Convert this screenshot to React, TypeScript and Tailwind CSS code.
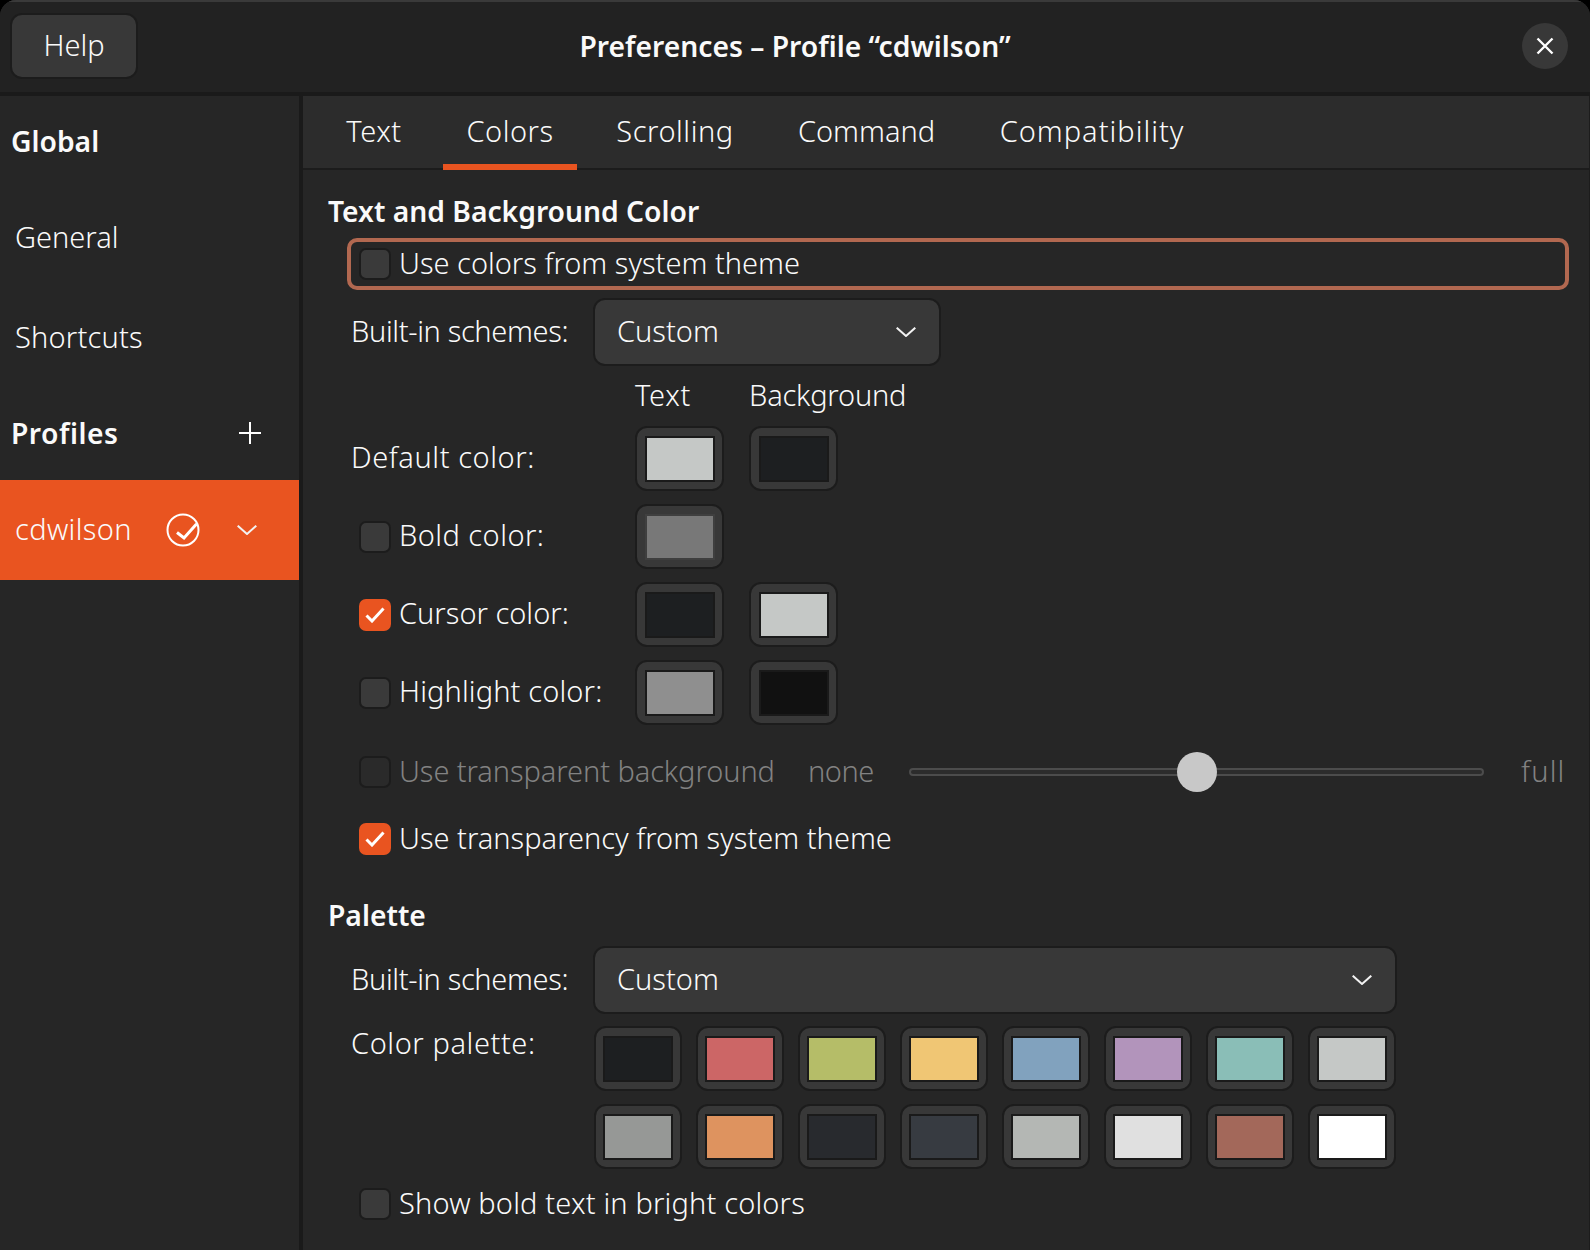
type SwatchProps = { color: string; muted?: boolean; className?: string };

function Swatch({ color, muted, className }: SwatchProps) {
  return (
    <div className={`box-border flex h-[65px] items-center justify-center rounded-[12px] border-2 border-[#1c1c1c] bg-[#383838] ${className ?? ""}`}>
      <div className={`box-border h-[46px] w-[70px] border-2 ${muted ? "border-[#3f3f3f]" : "border-[#1a1a1a]"}`} style={{ backgroundColor: color }} />
    </div>
  );
}

function Check({ checked, disabled }: { checked?: boolean; disabled?: boolean }) {
  if (checked) {
    return (
      <div className="flex h-[32px] w-[32px] shrink-0 items-center justify-center rounded-[7px] bg-[#e95420]">
        <svg width="20" height="16" viewBox="0 0 20 16" fill="none">
          <path d="M1.5 8.5 L7 14 L18.5 1.5" stroke="#fff" strokeWidth="3" />
        </svg>
      </div>
    );
  }
  return (
    <div className={`box-border h-[32px] w-[32px] shrink-0 rounded-[7px] border-2 border-[#1c1c1c] ${disabled ? "bg-[#2a2a2a]" : "bg-[#3a3a3a]"}`} />
  );
}

function Chevron({ className }: { className?: string }) {
  return (
    <svg className={className} width="20" height="10" viewBox="0 0 20 10" fill="none">
      <path d="M0.7 0.7 L10 9 L19.3 0.7" stroke="#f2f2f2" strokeWidth="2" />
    </svg>
  );
}

function Dropdown({ width }: { width: string }) {
  return (
    <div className={`box-border flex h-[68px] items-center justify-between rounded-[12px] border-2 border-[#1c1c1c] bg-[#383838] pl-[22px] pr-[23px] ${width}`}>
      <span className="pb-[4px]">Custom</span>
      <Chevron />
    </div>
  );
}

const palette = [
  "#1d1f21", "#cc6666", "#b5bd68", "#f0c674", "#81a2be", "#b294bb", "#8abeb7", "#c5c8c6",
  "#969896", "#de935f", "#282a2e", "#373b41", "#b4b7b4", "#e0e0e0", "#a3685a", "#ffffff",
];

const tabs = [
  { label: "Text", width: "w-[106px]", text: "tracking-[0.5px]" },
  { label: "Colors", width: "w-[134px]", active: true, text: "tracking-[0.5px]" },
  { label: "Scrolling", width: "w-[164px]", text: "tracking-[0.55px]" },
  { label: "Command", width: "w-[187px]", text: "" },
  { label: "Compatibility", width: "w-[232px]", text: "tracking-[1px]" },
];

function ColorRow({ label, tracking, check, fg, bg, muted }: { label: string; tracking?: string; check?: "on" | "off"; fg: string; bg?: string; muted?: boolean }) {
  return (
    <div className="flex h-[65px] items-center">
      <div className="flex w-[287px] items-center">
        {check ? (
          <div className="flex items-center gap-[8px] pl-[11px]">
            <Check checked={check === "on"} />
            <span className={`pb-[4px] ${tracking ?? ""}`}>{label}</span>
          </div>
        ) : (
          <span className={`pb-[4px] pl-[3px] ${tracking ?? ""}`}>{label}</span>
        )}
      </div>
      <Swatch color={fg} muted={muted} className="w-[89px]" />
      {bg && <Swatch color={bg} className="ml-[25px] w-[89px]" />}
    </div>
  );
}

export default function App() {
  return (
    <div className="h-[1250px] w-[1590px] overflow-hidden bg-black font-['Noto_Sans',sans-serif] text-[29px] font-light leading-none text-[#fafafa]">
      <div className="flex h-full flex-col overflow-hidden rounded-t-[16px] bg-[#262626]">
        <header className="box-border grid h-[96px] shrink-0 grid-cols-[1fr_auto_1fr] items-center border-t-2 border-b-4 border-t-[#3a3a3a] border-b-[#1a1a1a] bg-[#222222]">
          <div className="pb-[2px] pl-[10px]">
            <div className="box-border flex h-[66px] w-[128px] items-center justify-center rounded-[12px] border-2 border-[#1c1c1c] bg-[#383838]">
              <span className="pb-[4px]">Help</span>
            </div>
          </div>
          <div className="pb-[2px] text-[28.25px] font-semibold">Preferences – Profile “cdwilson”</div>
          <div className="flex justify-end pb-[2px] pr-[22px]">
            <div className="flex h-[46px] w-[46px] items-center justify-center rounded-full bg-[#383838]">
              <svg width="18" height="18" viewBox="0 0 18 18" fill="none">
                <path d="M1.5 1.5 L16.5 16.5 M16.5 1.5 L1.5 16.5" stroke="#fff" strokeWidth="2.4" />
              </svg>
            </div>
          </div>
        </header>

        <div className="flex min-h-0 flex-1 border-r border-[#1c1c1c]">
          <aside className="box-border w-[303px] shrink-0 border-r-4 border-[#1a1a1a]">
            <div className="flex h-[90px] items-center pl-[11px] text-[28.25px] font-semibold">Global</div>
            <div className="flex h-[102px] items-center pb-[2px] pl-[15px]">General</div>
            <div className="flex h-[98px] items-center pb-[2px] pl-[15px] tracking-[0.2px]">Shortcuts</div>
            <div className="flex h-[94px] items-center justify-between pl-[11px] pr-[38px] text-[28.25px] font-semibold">
              <span className="tracking-[0.5px]">Profiles</span>
              <svg width="22" height="22" viewBox="0 0 22 22" fill="none">
                <path d="M11 0 V22 M0 11 H22" stroke="#fff" strokeWidth="2" />
              </svg>
            </div>
            <div className="flex h-[100px] items-center bg-[#e95420] pl-[15px]">
              <span className="pb-[4px] tracking-[0.35px]">cdwilson</span>
              <svg className="ml-[34px]" width="34" height="34" viewBox="0 0 34 34" fill="none">
                <circle cx="17" cy="17" r="15.5" stroke="#fff" strokeWidth="2" />
                <path d="M11 19.5 L18 25 L30.5 11" stroke="#fff" strokeWidth="3" />
              </svg>
              <Chevron className="ml-[37px]" />
            </div>
          </aside>

          <main className="min-w-0 flex-1">
            <div className="box-border flex h-[74px] items-start gap-[16px] border-b-2 border-[#1c1c1c] bg-[#2c2c2c] pl-[18px]">
              {tabs.map((t) => (
                <div
                  key={t.label}
                  className={`box-border flex h-[74px] shrink-0 items-center justify-center ${t.width} ${t.active ? "border-b-[6px] border-[#e95420]" : "pb-[6px]"}`}
                >
                  <span className={t.text}>{t.label}</span>
                </div>
              ))}
            </div>

            <div className="pl-[25px] pr-[20px] pt-[16px]">
              <div className="flex h-[50px] items-center text-[28.25px] font-semibold">Text and Background Color</div>

              <div className="ml-[20px]">
                <div className="-ml-[1px] mt-[2px] box-border flex h-[52px] items-center gap-[8px] rounded-[10px] border-[4px] border-[#b26850] pl-[8px]">
                  <Check />
                  <span className="pb-[4px]">Use colors from system theme</span>
                </div>

                <div className="mt-[8px] flex items-center">
                  <span className="w-[245px] pb-[4px] pl-[3px] tracking-[-0.36px]">Built-in schemes:</span>
                  <Dropdown width="w-[348px]" />
                </div>

                <div className="flex h-[60px] items-center pb-[4px]">
                  <span className="w-[287px]" />
                  <span className="w-[114px] tracking-[0.7px]">Text</span>
                  <span className="tracking-[-0.2px]">Background</span>
                </div>

                <div className="flex flex-col gap-[13px]">
                  <ColorRow label="Default color:" tracking="tracking-[0.58px]" fg="#c5c8c6" bg="#1d1f21" />
                  <ColorRow label="Bold color:" tracking="tracking-[0.45px]" check="off" fg="#787878" muted />
                  <ColorRow label="Cursor color:" check="on" fg="#1d1f21" bg="#c5c8c6" />
                  <ColorRow label="Highlight color:" tracking="tracking-[0.13px]" check="off" fg="#8f8f8f" bg="#111111" />
                </div>

                <div className="mt-[27px] flex h-[40px] items-center">
                  <div className="flex w-[449px] items-center gap-[8px] pl-[11px]">
                    <Check disabled />
                    <span className="whitespace-nowrap pb-[4px] tracking-[-0.08px] text-[#828282]">Use transparent background</span>
                  </div>
                  <span className="ml-[11px] w-[101px] pb-[4px] tracking-[-0.5px] text-[#828282]">none</span>
                  <div className="relative box-border h-[8px] w-[575px] rounded-full border-2 border-[#4c4c4c] bg-[#2c2c2c]">
                    <div className="absolute left-[266px] top-[-18px] h-[40px] w-[40px] rounded-full bg-[#c8c8c8]" />
                  </div>
                  <span className="ml-[37px] pb-[4px] tracking-[1.2px] text-[#828282]">full</span>
                </div>

                <div className="mt-[27px] flex h-[40px] items-center gap-[8px] pl-[11px]">
                  <Check checked />
                  <span className="pb-[4px]">Use transparency from system theme</span>
                </div>
              </div>

              <div className="mt-[36px] flex h-[40px] items-center text-[28.25px] font-semibold">Palette</div>

              <div className="ml-[20px]">
                <div className="mt-[11px] flex items-center">
                  <span className="w-[245px] pb-[4px] pl-[3px] tracking-[-0.36px]">Built-in schemes:</span>
                  <Dropdown width="w-[804px]" />
                </div>

                <div className="mt-[12px] flex">
                  <span className="w-[246px] pb-[4px] pl-[3px] pt-[2px] leading-[30px] tracking-[0.58px]">Color palette:</span>
                  <div className="grid grid-cols-[repeat(8,88px)] gap-x-[14px] gap-y-[13px]">
                    {palette.map((c, i) => (
                      <Swatch key={i} color={c} />
                    ))}
                  </div>
                </div>

                <div className="mt-[15px] flex h-[40px] items-center gap-[8px] pl-[11px]">
                  <Check />
                  <span className="pb-[4px] tracking-[0.16px]">Show bold text in bright colors</span>
                </div>
              </div>
            </div>
          </main>
        </div>
      </div>
    </div>
  );
}
